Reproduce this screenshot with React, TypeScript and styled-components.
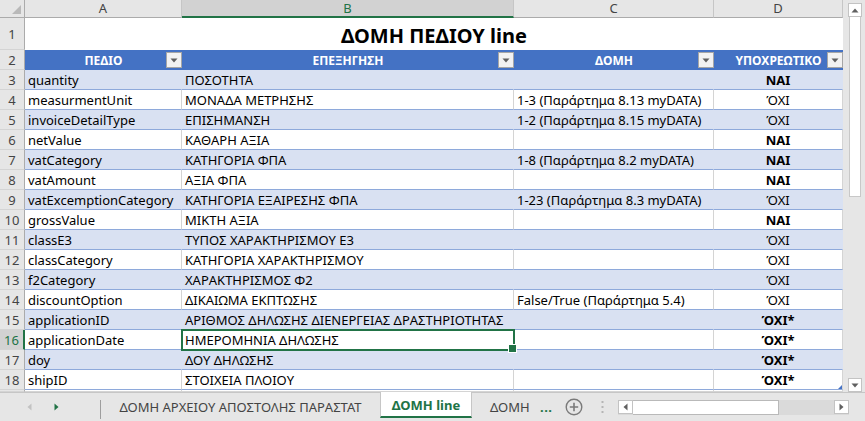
import React from 'react';
import styled, { createGlobalStyle, css } from 'styled-components';

const FONT = `'Noto Sans', 'DejaVu Sans', sans-serif`;
const GREEN = '#217346';
const BAND = '#D9E1F2';
const BLUE_LINE = '#8EA9DB';
const GRID = '#d4d4d4';
const HEAD_BG = '#e6e6e6';
const HEAD_SEL = '#d2d2d2';

const Global = createGlobalStyle`
  html, body { margin: 0; padding: 0; background: #fff; }
  body { font-family: ${FONT}; }
  * { box-sizing: border-box; }
`;

const Window = styled.div`
  width: 865px;
  height: 421px;
  display: flex;
  flex-direction: column;
  overflow: hidden;
  background: ${HEAD_BG};
  font-family: ${FONT};
`;

const Main = styled.div`
  display: flex;
  height: 392px;
`;

const Sheet = styled.div`
  width: 843px;
  height: 392px;
  overflow: hidden;
  background: #fff;
  display: grid;
  grid-template-columns: 25px 157px 332px 200px 129px;
  grid-template-rows: 18px 32px repeat(17, 20px);
`;

const Corner = styled.div`
  position: relative;
  background: ${HEAD_BG};
  border-right: 1px solid #ababab;
  border-bottom: 1px solid #ababab;
  &::after {
    content: '';
    position: absolute;
    right: 3px;
    bottom: 3px;
    width: 0;
    height: 0;
    border-left: 9px solid transparent;
    border-bottom: 9px solid #b9b9b9;
  }
`;

const ColHead = styled.div<{ $sel?: boolean }>`
  background: ${HEAD_BG};
  border-right: 1px solid #c6c6c6;
  border-bottom: 1px solid #ababab;
  color: #444;
  font-size: 13px;
  line-height: 17px;
  text-align: center;
  ${(p) =>
    p.$sel &&
    css`
      background: ${HEAD_SEL};
      color: ${GREEN};
      border-bottom: 2px solid ${GREEN};
    `}
`;

const RowHead = styled.div<{ $sel?: boolean }>`
  background: ${HEAD_BG};
  border-right: 1px solid #ababab;
  border-bottom: 1px solid ${GRID};
  color: #444;
  font-size: 13px;
  display: flex;
  align-items: center;
  justify-content: center;
  padding-top: 1px;
  ${(p) =>
    p.$sel &&
    css`
      background: ${HEAD_SEL};
      color: ${GREEN};
      border-right: 2px solid ${GREEN};
    `}
`;

const TitleCell = styled.div`
  grid-column: span 4;
  display: flex;
  align-items: flex-end;
  justify-content: center;
  padding-bottom: 1px;
  font-size: 20px;
  font-weight: 700;
  color: #000;
  line-height: 27px;
`;

const HeadCell = styled.div`
  position: relative;
  background: #4472c4;
  color: #fff;
  font-size: 12px;
  font-weight: 700;
  display: flex;
  align-items: center;
  justify-content: center;
  padding-top: 1px;
  white-space: nowrap;
`;

const FilterBtn = styled.div`
  position: absolute;
  right: 0;
  top: 2px;
  width: 16px;
  height: 16px;
  background: #f2f2f2;
  border: 1px solid #a6a6a6;
  display: flex;
  align-items: center;
  justify-content: center;
`;

const DataCell = styled.div<{
  $band?: boolean;
  $center?: boolean;
  $bold?: boolean;
  $sel?: boolean;
  $corner?: boolean;
}>`
  position: relative;
  background: ${(p) => (p.$band ? BAND : '#fff')};
  border-bottom: 1px solid ${BLUE_LINE};
  border-right: 1px solid ${(p) => (p.$band ? BAND : GRID)};
  color: #000;
  font-size: 13px;
  line-height: 18px;
  padding: 1px 3px 0;
  white-space: nowrap;
  overflow: visible;
  text-align: ${(p) => (p.$center ? 'center' : 'left')};
  font-weight: ${(p) => (p.$bold ? 700 : 400)};
  ${(p) =>
    p.$sel &&
    css`
      z-index: 2;
      outline: 2px solid ${GREEN};
      outline-offset: -1px;
      &::after {
        content: '';
        position: absolute;
        right: -4px;
        bottom: -4px;
        width: 7px;
        height: 7px;
        background: ${GREEN};
        border: 1px solid #fff;
      }
    `}
  ${(p) =>
    p.$corner &&
    css`
      &::after {
        content: '';
        position: absolute;
        right: 0;
        bottom: 0;
        width: 0;
        height: 0;
        border-left: 4px solid transparent;
        border-bottom: 4px solid #4472c4;
      }
    `}
`;

const BlankCell = styled.div`
  border-right: 1px solid ${GRID};
  border-bottom: 1px solid ${GRID};
  background: #fff;
`;

/* vertical scrollbar */
const VScroll = styled.div`
  width: 22px;
  height: 392px;
  background: ${HEAD_BG};
  display: flex;
  flex-direction: column;
  align-items: flex-start;
  padding: 3px 0 0 5px;
`;

const ArrowBtn = styled.div<{ $w?: number }>`
  width: ${(p) => p.$w ?? 14}px;
  height: 14px;
  flex: none;
  background: #fff;
  border: 1px solid #c3c3c3;
  display: flex;
  align-items: center;
  justify-content: center;
`;

const VThumb = styled.div`
  width: 12px;
  height: 180px;
  margin-left: 1px;
  background: #fff;
  border: 1px solid #c8c8c8;
  border-top: none;
`;

const Spacer = styled.div`
  flex: 1;
`;

/* tab bar */
const TabBar = styled.div`
  height: 29px;
  border-top: 1px solid #c6c6c6;
  display: flex;
  align-items: center;
  background: ${HEAD_BG};
`;

const Nav = styled.div`
  width: 100px;
  display: flex;
  align-items: center;
  gap: 22px;
  padding-left: 27px;
`;

const NavSep = styled.div`
  width: 1px;
  height: 19px;
  margin-top: 4px;
  background: #9e9e9e;
`;

const Tab = styled.div<{ $w: number }>`
  width: ${(p) => p.$w}px;
  font-size: 13px;
  color: #444;
  text-align: center;
  white-space: nowrap;
  overflow: hidden;
`;

const ActiveTab = styled.div`
  align-self: flex-start;
  margin-top: -1px;
  width: 92px;
  height: 26px;
  background: #fff;
  border-left: 1px solid #c6c6c6;
  border-right: 1px solid #c6c6c6;
  border-bottom: 2px solid ${GREEN};
  color: ${GREEN};
  font-weight: 700;
  font-size: 13px;
  display: flex;
  align-items: center;
  justify-content: center;
  padding-top: 1px;
`;

const NextTab = styled.div`
  width: 68px;
  padding-left: 18px;
  font-size: 13px;
  color: #444;
  white-space: nowrap;
`;

const Ellipsis = styled.div`
  width: 25px;
  color: ${GREEN};
  font-weight: 700;
  font-size: 13px;
  letter-spacing: 0.5px;
`;

const AddWrap = styled.div`
  width: 30px;
  display: flex;
  align-items: center;
`;

const DotsWrap = styled.div`
  width: 23px;
  padding-left: 6px;
  display: flex;
  align-items: center;
`;

const HScroll = styled.div`
  width: 231px;
  height: 15px;
  display: flex;
  background: #dadada;
`;

const HThumb = styled.div`
  width: 146px;
  height: 15px;
  background: #fff;
  border: 1px solid #b9b9b9;
  border-left: none;
`;

type Row = [string, string, string, string, boolean];

const rows: Row[] = [
  ['quantity', 'ΠΟΣΟΤΗΤΑ', '', 'ΝΑΙ', true],
  ['measurmentUnit', 'ΜΟΝΑΔΑ ΜΕΤΡΗΣΗΣ', '1-3 (Παράρτημα 8.13 myDATA)', 'ΌΧΙ', false],
  ['invoiceDetailType', 'ΕΠΙΣΗΜΑΝΣΗ', '1-2 (Παράρτημα 8.15 myDATA)', 'ΌΧΙ', false],
  ['netValue', 'ΚΑΘΑΡΗ ΑΞΙΑ', '', 'ΝΑΙ', true],
  ['vatCategory', 'ΚΑΤΗΓΟΡΙΑ ΦΠΑ', '1-8 (Παράρτημα 8.2 myDATA)', 'ΝΑΙ', true],
  ['vatAmount', 'ΑΞΙΑ ΦΠΑ', '', 'ΝΑΙ', true],
  ['vatExcemptionCategory', 'ΚΑΤΗΓΟΡΙΑ ΕΞΑΙΡΕΣΗΣ ΦΠΑ', '1-23 (Παράρτημα 8.3 myDATA)', 'ΌΧΙ', false],
  ['grossValue', 'ΜΙΚΤΗ ΑΞΙΑ', '', 'ΝΑΙ', true],
  ['classE3', 'ΤΥΠΟΣ ΧΑΡΑΚΤΗΡΙΣΜΟΥ Ε3', '', 'ΌΧΙ', false],
  ['classCategory', 'ΚΑΤΗΓΟΡΙΑ ΧΑΡΑΚΤΗΡΙΣΜΟΥ', '', 'ΌΧΙ', false],
  ['f2Category', 'ΧΑΡΑΚΤΗΡΙΣΜΟΣ Φ2', '', 'ΌΧΙ', false],
  ['discountOption', 'ΔΙΚΑΙΩΜΑ ΕΚΠΤΩΣΗΣ', 'False/True (Παράρτημα 5.4)', 'ΌΧΙ', false],
  ['applicationID', 'ΑΡΙΘΜΟΣ ΔΗΛΩΣΗΣ ΔΙΕΝΕΡΓΕΙΑΣ ΔΡΑΣΤΗΡΙΟΤΗΤΑΣ', '', 'ΌΧΙ*', true],
  ['applicationDate', 'ΗΜΕΡΟΜΗΝΙΑ ΔΗΛΩΣΗΣ', '', 'ΌΧΙ*', true],
  ['doy', 'ΔΟΥ ΔΗΛΩΣΗΣ', '', 'ΌΧΙ*', true],
  ['shipID', 'ΣΤΟΙΧΕΙΑ ΠΛΟΙΟΥ', '', 'ΌΧΙ*', true],
];

const DownTri = ({ c = '#5f5f5f' }: { c?: string }) => (
  <svg width="8" height="5" viewBox="0 0 8 5">
    <path d="M0.5 0.5 L7.5 0.5 L4 4.5 Z" fill={c} />
  </svg>
);

const UpTri = () => (
  <svg width="8" height="5" viewBox="0 0 8 5">
    <path d="M0.5 4.5 L7.5 4.5 L4 0.5 Z" fill="#606060" />
  </svg>
);

const SideTri = ({ dir, c }: { dir: 'l' | 'r'; c: string }) => (
  <svg width="5" height="8" viewBox="0 0 5 8">
    {dir === 'l' ? (
      <path d="M4.5 0.5 L4.5 7.5 L0.5 4 Z" fill={c} />
    ) : (
      <path d="M0.5 0.5 L0.5 7.5 L4.5 4 Z" fill={c} />
    )}
  </svg>
);

const Header = ({ label }: { label: string }) => (
  <HeadCell>
    {label}
    <FilterBtn>
      <DownTri />
    </FilterBtn>
  </HeadCell>
);

export default function App() {
  return (
    <>
      <Global />
      <Window>
        <Main>
          <Sheet>
            <Corner />
            <ColHead>A</ColHead>
            <ColHead $sel>B</ColHead>
            <ColHead>C</ColHead>
            <ColHead>D</ColHead>

            <RowHead>1</RowHead>
            <TitleCell>ΔΟΜΗ ΠΕΔΙΟΥ line</TitleCell>

            <RowHead>2</RowHead>
            <Header label="ΠΕΔΙΟ" />
            <Header label="ΕΠΕΞΗΓΗΣΗ" />
            <Header label="ΔΟΜΗ" />
            <Header label="ΥΠΟΧΡΕΩΤΙΚΟ" />

            {rows.map(([f, d, s, r, b], i) => {
              const n = i + 3;
              const band = n % 2 === 1;
              const sel = n === 16;
              return (
                <React.Fragment key={n}>
                  <RowHead $sel={sel}>{n}</RowHead>
                  <DataCell $band={band}>{f}</DataCell>
                  <DataCell $band={band} $sel={sel}>
                    {d}
                  </DataCell>
                  <DataCell $band={band}>{s}</DataCell>
                  <DataCell $band={band} $center $bold={b} $corner={n === 18}>
                    {r}
                  </DataCell>
                </React.Fragment>
              );
            })}

            <RowHead />
            <BlankCell />
            <BlankCell />
            <BlankCell />
            <BlankCell />
          </Sheet>
          <VScroll>
            <ArrowBtn $w={14}>
              <UpTri />
            </ArrowBtn>
            <VThumb />
            <Spacer />
            <ArrowBtn $w={14}>
              <DownTri c="#606060" />
            </ArrowBtn>
          </VScroll>
        </Main>
        <TabBar>
          <Nav>
            <SideTri dir="l" c="#c2c2c2" />
            <SideTri dir="r" c={GREEN} />
          </Nav>
          <NavSep />
          <Tab $w={279}>ΔΟΜΗ ΑΡΧΕΙΟΥ ΑΠΟΣΤΟΛΗΣ ΠΑΡΑΣΤΑΤ</Tab>
          <ActiveTab>ΔΟΜΗ line</ActiveTab>
          <NextTab>ΔΟΜΗ</NextTab>
          <Ellipsis>...</Ellipsis>
          <AddWrap>
            <svg width="18" height="18" viewBox="0 0 18 18">
              <circle cx="9" cy="9" r="7.8" fill="none" stroke="#7a7a7a" strokeWidth="1.4" />
              <path d="M9 4.8 V13.2 M4.8 9 H13.2" stroke="#7a7a7a" strokeWidth="1.6" />
            </svg>
          </AddWrap>
          <DotsWrap>
            <svg width="3" height="14" viewBox="0 0 3 14">
              <rect x="0.5" y="1" width="2" height="2" fill="#b5b5b5" />
              <rect x="0.5" y="6" width="2" height="2" fill="#b5b5b5" />
              <rect x="0.5" y="11" width="2" height="2" fill="#b5b5b5" />
            </svg>
          </DotsWrap>
          <HScroll>
            <ArrowBtn $w={15}>
              <SideTri dir="l" c="#606060" />
            </ArrowBtn>
            <HThumb />
            <Spacer />
            <ArrowBtn $w={15}>
              <SideTri dir="r" c="#606060" />
            </ArrowBtn>
          </HScroll>
        </TabBar>
      </Window>
    </>
  );
}
